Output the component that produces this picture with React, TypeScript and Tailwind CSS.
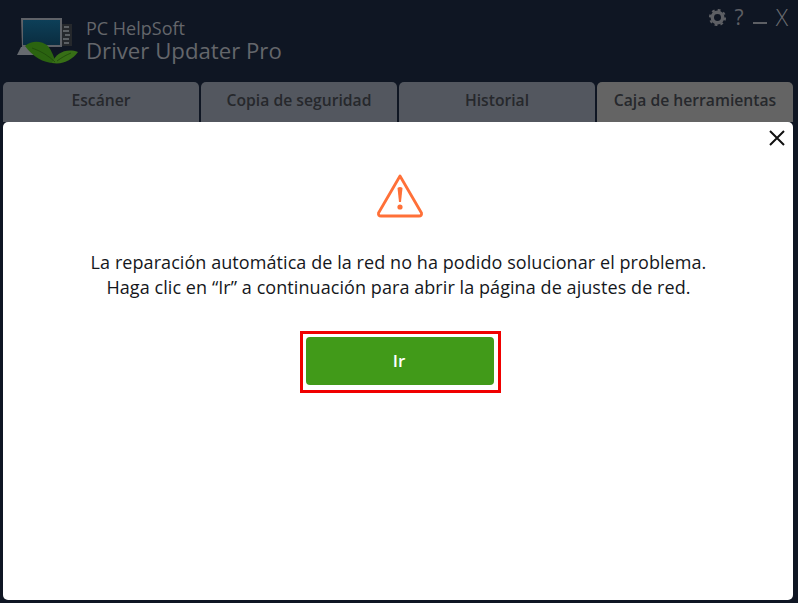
const tabs = [
  { label: "Escáner", color: "bg-[#53575f]" },
  { label: "Copia de seguridad", color: "bg-[#53575f]" },
  { label: "Historial", color: "bg-[#53575f]" },
  { label: "Caja de herramientas", color: "bg-[#646464]" },
];

function Logo() {
  return (
    <svg width="62" height="47" viewBox="0 0 62 47" className="shrink-0">
      <defs>
        <linearGradient id="screen" x1="0" y1="0" x2="0" y2="1">
          <stop offset="0" stopColor="#0d3f58" />
          <stop offset="1" stopColor="#0a2d40" />
        </linearGradient>
      </defs>
      <path d="M4 1 H45 V30 H5 Z" fill="#5f6268" />
      <rect x="6" y="3" width="37" height="25" fill="url(#screen)" />
      <rect x="45" y="7" width="10" height="22" fill="#25282c" />
      <path d="M47 10h5M46 14h6M48 18h5M46 22h6M47 26h5" stroke="#6d7176" strokeWidth="1.5" />
      <path d="M4 30 H26 V38 H0 Z" fill="#666a6f" />
      <path d="M8 29 C15 23 25 24 31 29 C35 34 37 40 39 46 C28 47 16 40 8 29 Z" fill="#2b6410" />
      <path d="M35 46 C39 36 49 31 61 35 C55 43 46 48 35 46 Z" fill="#376f16" />
      <path d="M15 31 C24 34 32 39 38 45 M40 44 C44 41 49 38 54 36" stroke="#1d470b" strokeWidth="0.8" fill="none" />
    </svg>
  );
}

export default function App() {
  return (
    <div className="w-[798px] h-[603px] bg-[#0f1623] flex flex-col overflow-hidden font-['Open_Sans','Noto_Sans',sans-serif]">
      <header className="h-[82px] flex justify-between shrink-0">
        <div className="flex items-start pl-[17px] pt-[17px] gap-[7px]">
          <Logo />
          <div className="flex flex-col text-[#64666b]">
            <span className="text-[18px] leading-[20px] mt-[1px] whitespace-nowrap">PC HelpSoft</span>
            <span className="text-[22.2px] leading-[26px] whitespace-nowrap">Driver Updater Pro</span>
          </div>
        </div>
        <div className="flex items-center h-[34px] pr-[10px] gap-[9px] text-[#5d5f64] text-[21px] leading-none">
          <svg width="17" height="17" viewBox="0 0 18 18">
            <circle cx="9" cy="9" r="5.5" fill="none" stroke="#5d5f64" strokeWidth="3.6" />
            <circle cx="9" cy="9" r="8" fill="none" stroke="#5d5f64" strokeWidth="2.2" strokeDasharray="3 3.28" />
          </svg>
          <span>?</span>
          <span className="w-[14px] h-[2px] bg-[#5d5f64] self-end mb-[10px]" />
          <span className="text-[23px] font-light text-[#6a6c71]">X</span>
        </div>
      </header>
      <nav className="flex gap-[2px] px-[3px] h-[40px] shrink-0">
        {tabs.map((tab) => (
          <div
            key={tab.label}
            className={`w-[196px] rounded-t-[5px] ${tab.color} flex items-center justify-center pb-[2px] text-[15.7px] font-semibold text-[#26282c]`}
          >
            {tab.label}
          </div>
        ))}
      </nav>
      <main className="mx-[3px] w-[790px] h-[478px] bg-white rounded-[5px] flex flex-col items-center relative">
        <button className="absolute top-[7px] right-[7px] w-[18px] h-[18px]">
          <svg width="18" height="18" viewBox="0 0 18 18">
            <path d="M2 2 L16 16 M16 2 L2 16" stroke="#111" strokeWidth="2" />
          </svg>
        </button>
        <svg width="48" height="46" viewBox="0 0 48 46" className="mt-[51px] ml-[3px]">
          <path d="M24 3 L45.5 40 Q46 43 43 43 H5 Q2 43 2.5 40 Z" fill="none" stroke="#ff7038" strokeWidth="2.8" strokeLinejoin="round" />
          <path d="M21.5 15 Q24 13 26.5 15 L25 29 H23 Z" fill="#ff7038" />
          <circle cx="24" cy="34" r="2.6" fill="#ff7038" />
        </svg>
        <p className="mt-[31px] ml-[1px] text-center text-[18px] tracking-[0.07px] leading-[25px] text-[#15171c] whitespace-nowrap">
          La reparación automática de la red no ha podido solucionar el problema.
          <br />
          Haga clic en “Ir” a continuación para abrir la página de ajustes de red.
        </p>
        <div className="mt-[31px] ml-[5px] border-[3px] border-[#f00000] pt-[3px] pl-[3px] pr-[4px] pb-[5px]">
          <button className="block w-[188px] h-[48px] rounded-[4px] bg-[#419a19] text-white text-[17px] font-semibold pr-[2px]">
            Ir
          </button>
        </div>
      </main>
    </div>
  );
}
